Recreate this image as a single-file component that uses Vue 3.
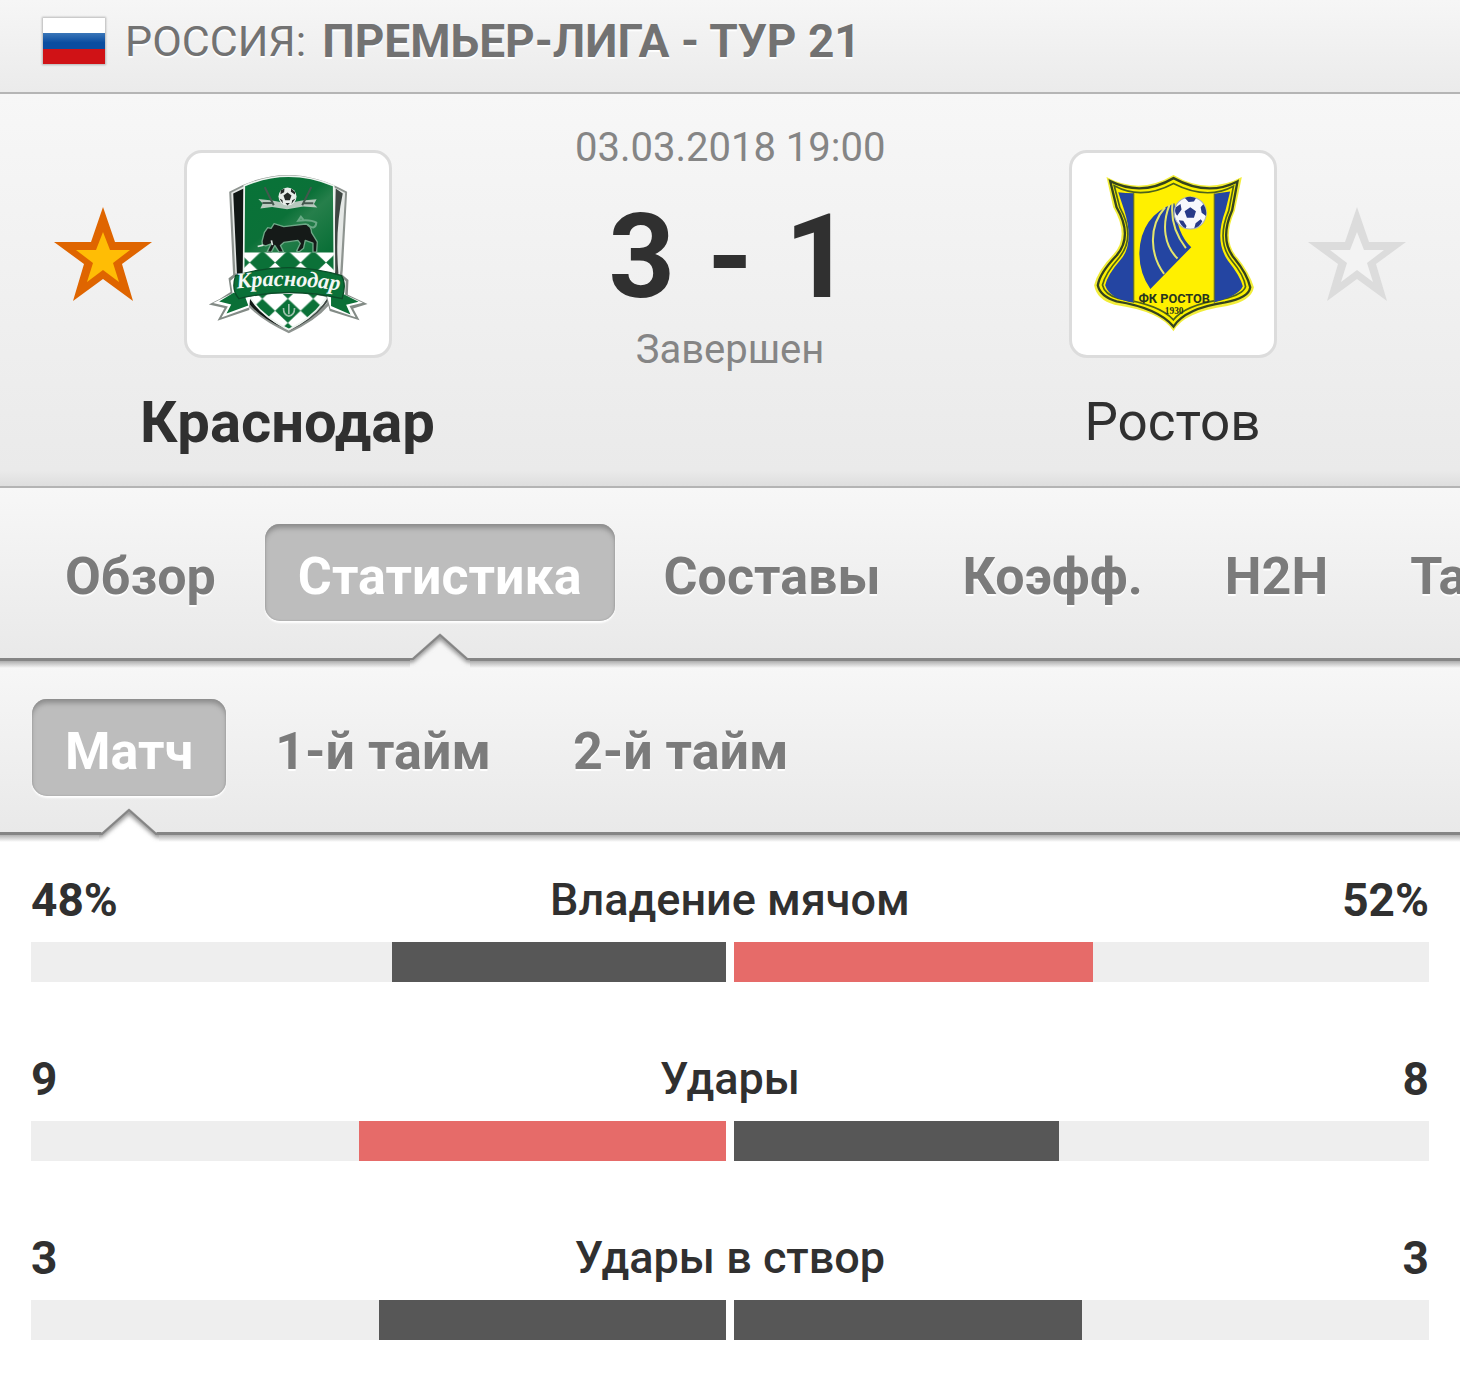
<script setup>
import { ref } from 'vue'

const tabs = ['Обзор', 'Статистика', 'Составы', 'Коэфф.', 'H2H', 'Таблица']
const periods = ['Матч', '1-й тайм', '2-й тайм']

const activeTab = ref('Статистика')
const activePeriod = ref('Матч')
const homeFavorite = ref(true)
const awayFavorite = ref(false)

const stats = [
  { name: 'Владение мячом', home: '48%', away: '52%', homeWidth: 48, awayWidth: 51.7 },
  { name: 'Удары', home: '9', away: '8', homeWidth: 52.8, awayWidth: 46.8 },
  { name: 'Удары в створ', home: '3', away: '3', homeWidth: 50, awayWidth: 50 }
]

const barClass = (own, other) => {
  return parseInt(own) > parseInt(other) ? 'red' : 'dark'
}
</script>

<template>
  <div class="page">
    <header class="league">
      <svg class="flag" viewBox="0 0 62 46" aria-hidden="true">
        <defs>
          <linearGradient id="flagBlue" x1="0" y1="0" x2="0" y2="1">
            <stop offset="0" stop-color="#3a76b8" />
            <stop offset="0.6" stop-color="#0a4da0" />
          </linearGradient>
        </defs>
        <rect width="62" height="16" fill="#fff" />
        <rect y="15" width="62" height="16" fill="url(#flagBlue)" />
        <rect y="31" width="62" height="15" fill="#d01216" />
      </svg>
      <span class="country">РОССИЯ:</span>
      <span class="round">ПРЕМЬЕР-ЛИГА - ТУР 21</span>
    </header>

    <section class="match">
      <div class="team">
        <button class="star" aria-label="Краснодар в избранное" @click="homeFavorite = !homeFavorite">
          <svg viewBox="0 0 98 94" :class="{ on: homeFavorite }">
            <polygon class="outer" points="49,0 61,35 98,35 68,57 79,94 49,72 19,94 30,57 0,35 37,35" />
            <polygon class="inner" points="49,25 56,43 76,43 59,56 65,75 49,63 33,75 39,56 22,43 42,43" />
          </svg>
        </button>
        <div class="crest">
          <svg viewBox="21 39 603 603" aria-hidden="true">
            <defs>
              <linearGradient id="green" x1="0" y1="0" x2="1" y2="1">
                <stop offset="0" stop-color="#087338" />
                <stop offset="0.5" stop-color="#0b7138" />
                <stop offset="0.62" stop-color="#267f4b" />
                <stop offset="1" stop-color="#046c33" />
              </linearGradient>
              <pattern id="diamonds" width="76" height="72" patternUnits="userSpaceOnUse" x="284" y="330">
                <rect width="76" height="72" fill="#fff" />
                <path d="M38 0L76 36L38 72L0 36Z" fill="#0b7138" />
              </pattern>
              <clipPath id="kShield">
                <path d="M192 137Q323 80 459 137L461 392Q462 500 325 566Q184 496 190 390Z" />
              </clipPath>
              <path id="ribbonText" d="M170 444Q322 424 490 452" />
            </defs>
            <path d="M147 155Q322 54 499 155L486 390Q484 505 325 577Q158 501 158 390Z" fill="#8e9490" />
            <path d="M153 158Q322 63 493 158L479 390Q472 499 325 569Q165 497 165 390Z" fill="#e5e8e6" />
            <path d="M159 160L190 145L188 398Q196 500 312 563Q178 505 170 398Z" fill="#111715" />
            <path d="M465 145L486 160Q462 270 473 398Q460 510 325 570Q468 495 459 390Z" fill="#3e4642" />
            <g clip-path="url(#kShield)">
              <rect x="180" y="90" width="290" height="250" fill="url(#green)" />
              <rect x="180" y="336" width="290" height="235" fill="url(#diamonds)" />
              <path d="M325 490V520M309 502Q309 524 325 526Q342 524 342 502" stroke="#9bbfaa" stroke-width="5" fill="none" />
            </g>
            <path d="M192 137Q323 80 459 137L461 392Q455 500 325 566Q184 496 190 390Z" fill="none" stroke="#edf4ef" stroke-width="5" />
            <!-- scarf, crossed sticks and ball -->
            <path d="M234 176L275 181L320 189L365 181L408 177L400 191L410 202L368 199L320 207L275 200L240 205L247 190Z" fill="#b7c9be" />
            <path d="M253 141L280 195M392 141L365 195M246 188H278M369 189H398" stroke="#44584e" stroke-width="6" />
            <circle cx="321" cy="169" r="27" fill="#e8eeea" />
            <path d="M321 157L333 166L328 180H314L309 166ZM301 150L312 145L311 156L300 162ZM332 145L344 156L343 163L331 155ZM297 175L306 179L307 190ZM345 175L335 180L333 191ZM315 188H328L321 196Z" fill="#252b28" />
            <!-- bull -->
            <path d="M245 302L252 276L262 262L272 264L281 250L310 259L375 251Q391 253 393 277L410 304L408 335L397 335L397 308L374 300L369 323L356 334L348 332L359 309L352 300L310 306L300 315L309 334L296 335L283 315L273 335H260L272 310L256 316L246 313Z" fill="#151a18" stroke="#6ea887" stroke-width="4" stroke-linejoin="round" />
            <path d="M381 254Q405 271 407 247Q390 236 353 241L361 229L368 238" stroke="#69a985" stroke-width="6" fill="none" />
            <path d="M232 318L249 314M273 300L276 314" stroke="#d8e2dc" stroke-width="5" fill="none" />
            <!-- ribbon -->
            <path d="M164 399L145 413L151 454L120 474L86 491L133 502L112 540L207 508L209 468Q323 438 437 469L447 511L536 538L517 503L560 490L501 462L503 418L484 402Z" fill="#838b86" />
            <path d="M166 407L151 420L157 458L99 487L143 497L124 530L206 500L211 460L437 460L449 504L524 529L506 496L546 486L493 462L495 422L481 407Z" fill="#fff" />
            <path d="M160 456L117 482L153 491L139 518L204 494L194 467ZM489 461L533 483L496 492L509 521L451 496L451 467Z" fill="#0b7037" />
            <path d="M166 405Q323 357 482 405Q498 430 484 474Q323 437 176 474Q152 449 166 405Z" fill="#0a7037" stroke="#0b4d29" stroke-width="4" />
            <text class="ribbon-name"><textPath href="#ribbonText">Краснодар</textPath></text>
          </svg>
        </div>
        <div class="name winner">Краснодар</div>
      </div>

      <div class="result">
        <div class="date">03.03.2018 19:00</div>
        <div class="score"><span>3</span><span>-</span><span>1</span></div>
        <div class="status">Завершен</div>
      </div>

      <div class="team away">
        <div class="crest">
          <svg viewBox="31 39 603 603" aria-hidden="true">
            <path d="M134 111Q234 165 334 105Q434 165 538 111L517 212Q478 300 525 352Q561 397 574 440Q567 481 494 496Q365 514 334 571Q298 512 158 492Q105 478 97 434Q106 391 155 341Q204 287 154 201Z" fill="#f2ed38" />
            <path d="M145 123Q240 170 334 114Q435 170 525 124L509 210Q470 299 516 354Q554 400 563 440Q559 471 488 485Q369 503 334 557Q288 502 164 482Q115 467 108 434Q114 397 164 345Q214 287 164 201Z" fill="#faf000" stroke="#34431e" stroke-width="7" />
            <path d="M157 137Q239 181 334 130Q433 181 513 138L499 211Q461 301 507 359Q545 404 549 438Q542 461 482 475Q367 493 334 537Q292 491 169 473Q128 461 122 433Q129 400 173 350Q222 289 174 202Z" fill="#fff000" stroke="#4d621c" stroke-width="5" />
            <path d="M169 156Q190 159 216 159V486Q144 476 130 434Q137 403 176 358Q218 309 187 210ZM455 161L503 154L489 211Q455 301 496 360Q533 406 541 437Q528 466 455 485Z" fill="#2445a2" />
            <path d="M215 159V486M456 161V485" stroke="#626d34" stroke-width="4" />
            <path d="M337 189Q236 226 232 337Q232 398 265 445L387 320Q344 282 337 189Z" fill="#2445a2" />
            <path d="M309 201C257 260 265 345 306 400M322 194C298 255 307 316 346 354M331 190Q323 261 371 323" stroke="#e4e56b" stroke-width="6" fill="none" />
            <circle cx="384" cy="218" r="48" fill="#f7f8fc" stroke="#aab2bc" stroke-width="3" />
            <path d="M384 201L401 213L395 232H374L367 213ZM368 173Q385 165 401 174L395 184L379 185ZM341 201L355 191L358 208L345 226Q335 215 341 201ZM423 192Q434 207 431 227L418 217L415 201ZM350 240L363 241L373 257L370 264Q356 258 350 240ZM400 249L415 237L420 243Q412 260 396 264Z" fill="#283a88" />
            <text class="rostov-name" x="336" y="487">ФК РОСТОВ</text>
            <text class="rostov-year" x="336" y="521">1930</text>
          </svg>
        </div>
        <button class="star" aria-label="Ростов в избранное" @click="awayFavorite = !awayFavorite">
          <svg viewBox="0 0 98 94" :class="{ on: awayFavorite }">
            <polygon class="outer" points="49,0 61,35 98,35 68,57 79,94 49,72 19,94 30,57 0,35 37,35" />
            <polygon class="inner" points="49,25 56,43 76,43 59,56 65,75 49,63 33,75 39,56 22,43 42,43" />
          </svg>
        </button>
        <div class="name">Ростов</div>
      </div>
    </section>

    <nav class="tabs">
      <button v-for="tab in tabs" :key="tab" :class="{ active: tab === activeTab }" @click="activeTab = tab">
        {{ tab }}
        <svg v-if="tab === activeTab" class="arrow" viewBox="0 0 60 38" aria-hidden="true">
          <defs>
            <clipPath id="arrowClip">
              <path d="M0 25H2L30 0L58 25H60V38H0Z" />
            </clipPath>
            <filter id="arrowBlur" x="-50%" y="-50%" width="200%" height="200%">
              <feGaussianBlur stdDeviation="2" />
            </filter>
          </defs>
          <g clip-path="url(#arrowClip)">
            <rect width="60" height="38" fill="#f6f6f6" />
            <path class="arrow-shadow" d="M-30 27H2L30 3L58 27H90" />
            <path class="arrow-line" d="M-30 26H3L30 2L57 26H90" />
          </g>
        </svg>
      </button>
    </nav>

    <nav class="tabs periods">
      <button v-for="period in periods" :key="period" :class="{ active: period === activePeriod }" @click="activePeriod = period">
        {{ period }}
        <svg v-if="period === activePeriod" class="arrow" viewBox="0 0 60 38" aria-hidden="true">
          <g clip-path="url(#arrowClip)">
            <rect width="60" height="38" fill="#fff" />
            <path class="arrow-shadow" d="M-30 27H2L30 3L58 27H90" />
            <path class="arrow-line" d="M-30 26H3L30 2L57 26H90" />
          </g>
        </svg>
      </button>
    </nav>

    <main class="stats">
      <div v-for="stat in stats" :key="stat.name" class="stat">
        <div class="labels">
          <span class="value">{{ stat.home }}</span>
          <span>{{ stat.name }}</span>
          <span class="value right">{{ stat.away }}</span>
        </div>
        <div class="bars">
          <div class="track home">
            <div :class="barClass(stat.home, stat.away)" :style="{ width: stat.homeWidth + '%' }"></div>
          </div>
          <div class="track">
            <div :class="barClass(stat.away, stat.home)" :style="{ width: stat.awayWidth + '%' }"></div>
          </div>
        </div>
      </div>
    </main>
  </div>
</template>

<style>
body {
  margin: 0;
  background: #fff;
}
</style>

<style scoped>
.page {
  font-family: Roboto, "Noto Sans", sans-serif;
  color: #303030;
  overflow: hidden;
}

button {
  font: inherit;
  border: none;
  background: none;
  padding: 0;
  cursor: pointer;
}

.league {
  display: flex;
  align-items: center;
  box-sizing: border-box;
  height: 94px;
  padding: 0 43px 10px;
  background: linear-gradient(#f6f6f6, #ebebeb);
  border-bottom: 2px solid #b5b5b5;
  color: #727272;
  line-height: 56px;
  white-space: nowrap;
  text-shadow: 0 2px 1px #fff;
}

.flag {
  width: 62px;
  height: 46px;
  margin-right: 20px;
  box-shadow: 0 0 2px 1px rgba(0, 0, 0, 0.25);
}

.country {
  margin-right: 16px;
  font-size: 43px;
}

.round {
  font-size: 46px;
  font-weight: bold;
}

.match {
  display: grid;
  grid-template-columns: 1fr 310px 1fr;
  background: linear-gradient(#f7f7f7, #eaeaea 96%, #dedede);
  border-bottom: 2px solid #b4b4b4;
  padding-bottom: 34px;
}

.team {
  display: grid;
  grid-template-columns: 1fr auto 1fr;
  align-items: center;
  row-gap: 34px;
  padding-top: 56px;
}

.crest {
  grid-column: 2;
  grid-row: 1;
  width: 202px;
  height: 202px;
  border: 3px solid #dcdcdc;
  border-radius: 18px;
  background: #fff;
}

.crest svg {
  display: block;
}

.ribbon-name {
  font: italic bold 66px "Liberation Serif", serif;
  fill: #f4f7f5;
}

.rostov-name {
  font: bold 38px Roboto, sans-serif;
  fill: #28351f;
  text-anchor: middle;
}

.rostov-year {
  font: bold 28px "Liberation Serif", serif;
  fill: #28351f;
  text-anchor: middle;
}

.star {
  grid-row: 1;
  justify-self: center;
  margin-left: 22px;
}

.away .star {
  grid-column: 3;
  margin-left: 0;
  margin-right: 22px;
}

.star svg {
  display: block;
  width: 98px;
  height: 94px;
}

.outer {
  fill: #dcdcdc;
}

.inner {
  fill: #f3f3f3;
}

.on .outer {
  fill: #df6500;
}

.on .inner {
  fill: #ffbd05;
}

.name {
  grid-column: 1 / -1;
  text-align: center;
  font-size: 53px;
  line-height: 60px;
}

.winner {
  font-size: 58px;
  font-weight: bold;
}

.result {
  padding-top: 30px;
  text-align: center;
  color: #858585;
  font-size: 40px;
  line-height: 48px;
  white-space: nowrap;
}

.score {
  display: flex;
  justify-content: center;
  gap: 32px;
  margin: 27px 0 11px;
  color: #303030;
  font-size: 116px;
  font-weight: bold;
  line-height: 116px;
}

.tabs {
  display: flex;
  gap: 16px;
  padding: 36px 32px 37px;
  background: linear-gradient(#f7f7f7, #e9e9e9);
}

.tabs button {
  position: relative;
  flex: none;
  height: 97px;
  padding: 8px 33px 0;
  border-radius: 15px;
  color: #7b7b7b;
  font-size: 52px;
  font-weight: bold;
  text-shadow: 0 2px 1px #fff;
}

.tabs .active {
  background: #bdbdbd;
  color: #fff;
  text-shadow: none;
  box-shadow: inset 0 5px 5px -1px #8d8d8d, inset 0 0 2px #999, 0 2px 2px #fff;
}

.arrow {
  position: absolute;
  z-index: 1;
  left: 50%;
  top: 109px;
  width: 60px;
  height: 38px;
  margin-left: -30px;
}

.arrow-shadow {
  fill: none;
  stroke: #8c8c8c;
  stroke-width: 5px;
  filter: url(#arrowBlur);
}

.arrow-line {
  fill: none;
  stroke: #858585;
  stroke-width: 2px;
}

.tabs.periods {
  padding: 38px 32px 36px;
  background: linear-gradient(rgba(0, 0, 0, 0.3), transparent 7px), linear-gradient(#f7f7f7, #e9e9e9);
}

.periods,
.stats {
  border-top: 3px solid #858585;
}

.stats {
  padding: 39px 31px 0;
  background: linear-gradient(rgba(0, 0, 0, 0.3), transparent 7px);
}

.stat {
  margin-bottom: 71px;
}

.labels {
  display: grid;
  grid-template-columns: 1fr auto 1fr;
  font-size: 45px;
  font-weight: 500;
  line-height: 52px;
}

.value {
  font-size: 46px;
  font-weight: bold;
}

.right {
  text-align: right;
}

.bars {
  display: grid;
  grid-template-columns: 1fr 1fr;
  gap: 8px;
  margin-top: 16px;
}

.track {
  display: flex;
  height: 40px;
  background: #eee;
}

.home {
  justify-content: flex-end;
}

.dark {
  background: #575757;
}

.red {
  background: #e66b69;
}
</style>
